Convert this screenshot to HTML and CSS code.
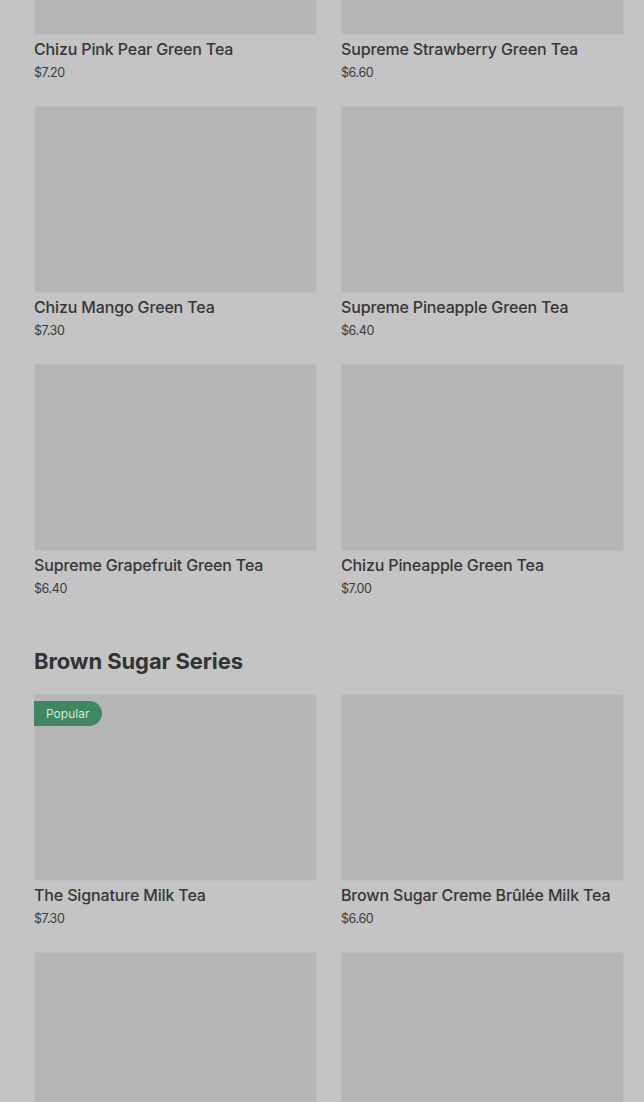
FILE: index.html
```html
<!DOCTYPE html>
<html lang="en">
<head>
  <meta charset="UTF-8">
  <meta name="viewport" content="width=device-width, initial-scale=1.0">
  <title>Menu</title>
  <link rel="stylesheet" href="styles.css">
</head>
<body>
  <div class="menu">
    <section class="series series-first">
      <ul class="grid">
        <li class="card">
          <div class="pic"></div>
          <h3 class="name">Chizu Pink Pear Green Tea</h3>
          <p class="price">$7.20</p>
        </li>
        <li class="card">
          <div class="pic"></div>
          <h3 class="name">Supreme Strawberry Green Tea</h3>
          <p class="price">$6.60</p>
        </li>
        <li class="card">
          <div class="pic"></div>
          <h3 class="name">Chizu Mango Green Tea</h3>
          <p class="price">$7.30</p>
        </li>
        <li class="card">
          <div class="pic"></div>
          <h3 class="name">Supreme Pineapple Green Tea</h3>
          <p class="price">$6.40</p>
        </li>
        <li class="card">
          <div class="pic"></div>
          <h3 class="name">Supreme Grapefruit Green Tea</h3>
          <p class="price">$6.40</p>
        </li>
        <li class="card">
          <div class="pic"></div>
          <h3 class="name">Chizu Pineapple Green Tea</h3>
          <p class="price">$7.00</p>
        </li>
      </ul>
    </section>

    <section class="series">
      <h2 class="title">Brown Sugar Series</h2>
      <ul class="grid">
        <li class="card">
          <div class="pic"><span class="badge">Popular</span></div>
          <h3 class="name">The Signature Milk Tea</h3>
          <p class="price">$7.30</p>
        </li>
        <li class="card">
          <div class="pic"></div>
          <h3 class="name">Brown Sugar Creme Brûlée Milk Tea</h3>
          <p class="price">$6.60</p>
        </li>
        <li class="card">
          <div class="pic"></div>
        </li>
        <li class="card">
          <div class="pic"></div>
        </li>
      </ul>
    </section>
  </div>
</body>
</html>
```

FILE: styles.css
```css
html, body{
  margin: 0;
  padding: 0;
  background-color: #c4c4c4;
  overflow: hidden;
}

body{
  font-family: Inter, Roboto, "Liberation Sans", Arial, sans-serif;
  color: #333;
}

ul{
  padding: 0;
  margin: 0;
  list-style: none;
}

h2, h3, p{
  margin: 0;
}

.menu{
  padding: 0 20px 0 34px;
}

/* page is scrolled: first row only shows the bottom of its pictures */
.series-first{
  margin-top: -152px;
}

.series + .series{
  margin-top: 48px;
}

.title{
  font-size: 22px;
  font-weight: 700;
  line-height: 30px;
  letter-spacing: -0.1px;
  color: #333;
  margin-bottom: 18px;
}

.grid{
  display: grid;
  grid-template-columns: 1fr 1fr;
  column-gap: 24px;
  row-gap: 24px;
}

.card .pic{
  position: relative;
  height: 187px;
  box-sizing: border-box;
  border: 1px solid #bdbdbd;
  background-color: #b5b5b5;
}

.card .badge{
  position: absolute;
  top: 6px;
  left: -1px;
  height: 25px;
  padding: 0 13px 0 12px;
  line-height: 25px;
  font-size: 12px;
  color: #d6e6dc;
  background-color: #3e8761;
  border-radius: 0 13px 13px 0;
}

.card .name{
  margin-top: 2px;
  font-size: 16px;
  font-weight: 500;
  line-height: 24px;
  letter-spacing: -0.15px;
  color: #363636;
  white-space: nowrap;
}

.card .price{
  margin-top: 3px;
  font-size: 12.5px;
  line-height: 18px;
  color: #3a3a3a;
  letter-spacing: -0.4px;
}
```
